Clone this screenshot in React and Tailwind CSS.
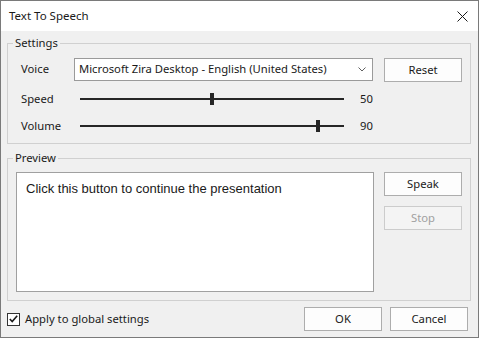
import React from 'react';

const ui = "[font-family:'Noto_Sans',sans-serif] text-[11.25px] text-[#1a1a1a]";

const Button = ({ children, disabled }) => (
  <button
    className={`w-[78px] h-[24px] border leading-[22px] ${
      disabled ? 'border-[#cccccc] bg-[#f4f4f4] text-[#a0a0a0]' : 'border-[#adadad] bg-[#fdfdfd] text-[#1a1a1a]'
    }`}
  >
    {children}
  </button>
);

const Slider = ({ value }) => (
  <div className="relative w-[264px] h-[24px] flex items-center">
    <div className="w-full h-[2px] bg-[#262626]" />
    <div
      className="absolute top-[6px] w-[4px] h-[12px] bg-[#262626]"
      style={{ left: `${Math.round((value / 100) * 264) - 2}px` }}
    />
  </div>
);

const App = () => {
  return (
    <div className={`w-[479px] h-[338px] border border-[#7a7a7a] flex flex-col bg-[#f0f0f0] ${ui}`}>
      {/* Title bar */}
      <div className="h-[30px] bg-white flex items-center justify-between pl-[8px] pr-[10px]">
        <span className="text-[11.5px] leading-4">Text To Speech</span>
        <svg width="11" height="11" viewBox="0 0 11 11">
          <path d="M0.5 0.5 L10.5 10.5 M10.5 0.5 L0.5 10.5" stroke="#1a1a1a" strokeWidth="1" fill="none" />
        </svg>
      </div>

      {/* Settings */}
      <fieldset className="mt-[4px] ml-[6px] w-[464px] border border-[#d0d0d0]">
        <legend className="ml-[5px] px-[2px] leading-4">Settings</legend>
        <div className="pl-[13px] pt-[7px] pb-[5px]">
          <div className="flex items-center h-[23px]">
            <span className="w-[53px]">Voice</span>
            <div className="w-[299px] h-[23px] border border-[#9a9a9a] bg-white flex items-center justify-between pl-[4px] pr-[6px]">
              <span>Microsoft Zira Desktop - English (United States)</span>
              <svg width="8" height="5" viewBox="0 0 8 5">
                <path d="M0.5 0.5 L4 4 L7.5 0.5" stroke="#606060" strokeWidth="1" fill="none" />
              </svg>
            </div>
            <div className="ml-[11px]">
              <Button>Reset</Button>
            </div>
          </div>
          <div className="mt-[6px] flex items-center h-[24px]">
            <span className="w-[59px]">Speed</span>
            <Slider value={50} />
            <span className="ml-[16px]">50</span>
          </div>
          <div className="mt-[3px] flex items-center h-[24px]">
            <span className="w-[59px]">Volume</span>
            <Slider value={90} />
            <span className="ml-[16px]">90</span>
          </div>
        </div>
      </fieldset>

      {/* Preview */}
      <fieldset className="mt-[6px] ml-[6px] w-[464px] border border-[#d0d0d0]">
        <legend className="ml-[5px] px-[2px] leading-4">Preview</legend>
        <div className="pl-[8px] pt-[6px] pb-[8px] flex">
          <div className="w-[358px] h-[120px] border border-[#a0a0a0] bg-white pl-[9px] pt-[8px] [font-family:'Liberation_Sans',Arial,sans-serif] text-[13px] leading-[15px] text-[#1a1a1a]">
            Click this button to continue the presentation
          </div>
          <div className="ml-[10px] flex flex-col">
            <Button>Speak</Button>
            <div className="mt-[10px]">
              <Button disabled>Stop</Button>
            </div>
          </div>
        </div>
      </fieldset>

      {/* Footer */}
      <div className="mt-[6px] h-[24px] flex items-center justify-between pl-[6px] pr-[10px]">
        <label className="flex items-center">
          <span className="w-[13px] h-[13px] border border-[#333333] bg-white flex items-center justify-center">
            <svg width="9" height="8" viewBox="0 0 9 8">
              <path d="M0.8 4 L3.2 6.5 L8.2 0.8" stroke="#1a1a1a" strokeWidth="1.6" fill="none" />
            </svg>
          </span>
          <span className="ml-[5px]">Apply to global settings</span>
        </label>
        <div className="flex">
          <Button>OK</Button>
          <div className="ml-[8px]">
            <Button>Cancel</Button>
          </div>
        </div>
      </div>
    </div>
  );
};

export default App;
